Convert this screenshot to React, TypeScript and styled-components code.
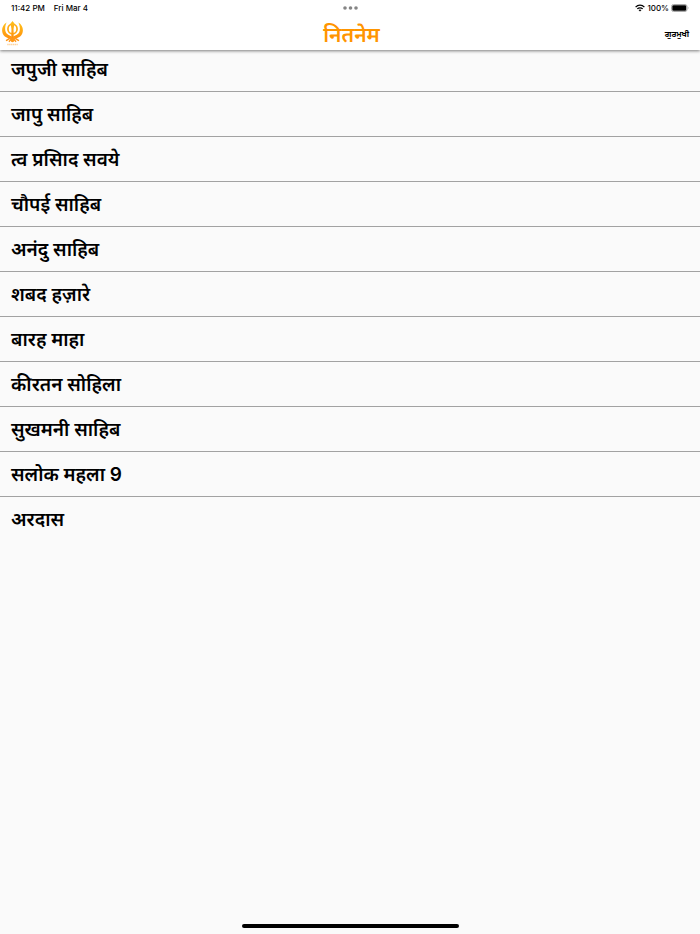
import React from "react";
import styled, { createGlobalStyle } from "styled-components";

const GlobalStyle = createGlobalStyle`
  * { box-sizing: border-box; }
  body {
    margin: 0;
    background: #fafafa;
    color: #000;
    font-family: Inter, "Noto Sans", "Noto Sans Devanagari", "Noto Sans Gurmukhi", sans-serif;
  }
`;

const Screen = styled.div`
  display: flex;
  flex-direction: column;
  min-height: 100vh;
`;

const Top = styled.div`
  position: sticky;
  top: 0;
  z-index: 1;
  background: #fff;
  box-shadow: 0 1px 3px rgba(0, 0, 0, 0.5);
`;

const StatusBar = styled.div`
  display: grid;
  grid-template-columns: 1fr auto 1fr;
  align-items: center;
  height: 16px;
  padding: 0 11px;
  font-size: 8px;
  font-weight: 500;
  line-height: 16px;
`;

const StatusGroup = styled.div<{ $end?: boolean; $gap: number }>`
  display: flex;
  align-items: center;
  gap: ${(p) => p.$gap}px;
  justify-content: ${(p) => (p.$end ? "flex-end" : "flex-start")};
`;

const Header = styled.header`
  display: grid;
  grid-template-columns: 1fr auto 1fr;
  align-items: center;
  height: 34px;
  padding: 0 11px 0 2px;
`;

const Title = styled.h1`
  margin: 0;
  padding: 3px 0 0 12px;
  color: #ff9500;
  font-size: 21px;
  font-weight: 600;
  line-height: 32px;
`;

const ScriptButton = styled.button`
  justify-self: end;
  padding: 0;
  border: 0;
  background: none;
  color: #000;
  font: inherit;
  font-size: 8px;
  font-weight: 700;
  line-height: 16px;
`;

const List = styled.ul`
  flex: 1;
  margin: -3px 0 0;
  padding: 0;
  list-style: none;
`;

const Item = styled.li`
  & + & { border-top: 1px solid #a2a2a2; }
`;

const ItemButton = styled.button`
  display: block;
  width: 100%;
  height: 44px;
  padding: 2px 11px 0;
  border: 0;
  background: none;
  color: #000;
  font: inherit;
  font-size: 19px;
  font-weight: 600;
  line-height: 40px;
  text-align: left;
`;

const HomeArea = styled.footer`
  display: flex;
  justify-content: center;
  padding-bottom: 6px;
`;

const HomeBar = styled.div`
  width: 31%;
  height: 4px;
  border-radius: 2px;
  background: #000;
`;

const Khanda = () => (
  <svg width="21" height="25" viewBox="0 0 22 25" preserveAspectRatio="none" fill="none" aria-label="Khanda" role="img">
    <defs>
      <linearGradient id="gold" x1="0" y1="0" x2="0" y2="1">
        <stop offset="0" stopColor="#ffc21a" />
        <stop offset="1" stopColor="#ff8a0c" />
      </linearGradient>
    </defs>
    <circle cx="11" cy="8" r="4.800" stroke="#ffab14" strokeWidth="1.800" />
    <path d="M11 0 L13 2.600 L12.100 8 L12.300 18 H9.700 L9.900 8 L9 2.600Z" fill="url(#gold)" />
    <path d="M4.800 1.500C-1 4.800-1.200 12.200 3 15.400C5.600 17.200 8 17 9.800 19.400L11.400 17C9.600 13.800 5.600 14.600 3.900 11C2.700 8 3.400 4.500 4.800 1.500Z" fill="url(#gold)" />
    <path d="M17.200 1.500C23 4.800 23.200 12.200 19 15.400C16.400 17.200 14 17 12.200 19.400L10.600 17C12.400 13.800 16.400 14.600 18.100 11C19.300 8 18.600 4.500 17.200 1.500Z" fill="url(#gold)" />
    <path d="M4.800 19.400L9.400 16.500M17.200 19.400L12.600 16.500M7.700 20.300L10.500 17.500M14.300 20.300L11.500 17.500" stroke="#ff981c" strokeWidth="1.600" strokeLinecap="round" />
    <circle cx="11" cy="19.400" r="1.800" fill="#ff9814" />
    <path d="M5.500 23.500H16.500" stroke="#ffd39c" strokeWidth="1.500" strokeDasharray="1.500 .5" />
  </svg>
);

const Dots = () => (
  <svg width="15" height="4" viewBox="0 0 15 4" fill="#858585" aria-hidden="true">
    <circle cx="2" cy="2" r="1.800" />
    <circle cx="7.500" cy="2" r="1.800" />
    <circle cx="13" cy="2" r="1.800" />
  </svg>
);

const Wifi = () => (
  <svg width="10" height="8" viewBox="0 0 10 8" fill="none" stroke="#000" strokeWidth="1.300" aria-hidden="true">
    <path d="M.6 3.100C3 .5 7 .5 9.400 3.100M2.300 4.900C3.800 3.400 6.200 3.400 7.700 4.900" />
    <path d="M5 7.600L3.500 6.100Q5 5 6.500 6.100Z" fill="#000" stroke="none" />
  </svg>
);

const Battery = () => (
  <svg width="18" height="8" viewBox="0 0 18 8" aria-hidden="true">
    <rect x=".5" y=".5" width="15.500" height="7" rx="2" fill="#fff" stroke="#aaa" />
    <rect x="1.300" y="1.300" width="13.900" height="5.400" rx="1.200" fill="#000" />
    <path d="M16.900 2.800Q18.200 4 16.900 5.200Z" fill="#aaa" />
  </svg>
);

const prayers = [
  "जपुजी साहिब",
  "जापु साहिब",
  "त्व प्रसिाद सवये",
  "चौपई साहिब",
  "अनंदु साहिब",
  "शबद हज़ारे",
  "बारह माहा",
  "कीरतन सोहिला",
  "सुखमनी साहिब",
  "सलोक महला 9",
  "अरदास",
];

export default function App() {
  return (
    <Screen>
      <GlobalStyle />
      <Top>
        <StatusBar>
          <StatusGroup $gap={9}>
            <span>11:42 PM</span>
            <span>Fri Mar 4</span>
          </StatusGroup>
          <Dots />
          <StatusGroup $end $gap={2}>
            <Wifi />
            <span>100%</span>
            <Battery />
          </StatusGroup>
        </StatusBar>
        <Header>
          <Khanda />
          <Title lang="hi">नितनेम</Title>
          <ScriptButton type="button" lang="pa">ਗੁਰਮੁਖੀ</ScriptButton>
        </Header>
      </Top>
      <List lang="hi">
        {prayers.map((name) => (
          <Item key={name}>
            <ItemButton type="button">{name}</ItemButton>
          </Item>
        ))}
      </List>
      <HomeArea>
        <HomeBar />
      </HomeArea>
    </Screen>
  );
}
